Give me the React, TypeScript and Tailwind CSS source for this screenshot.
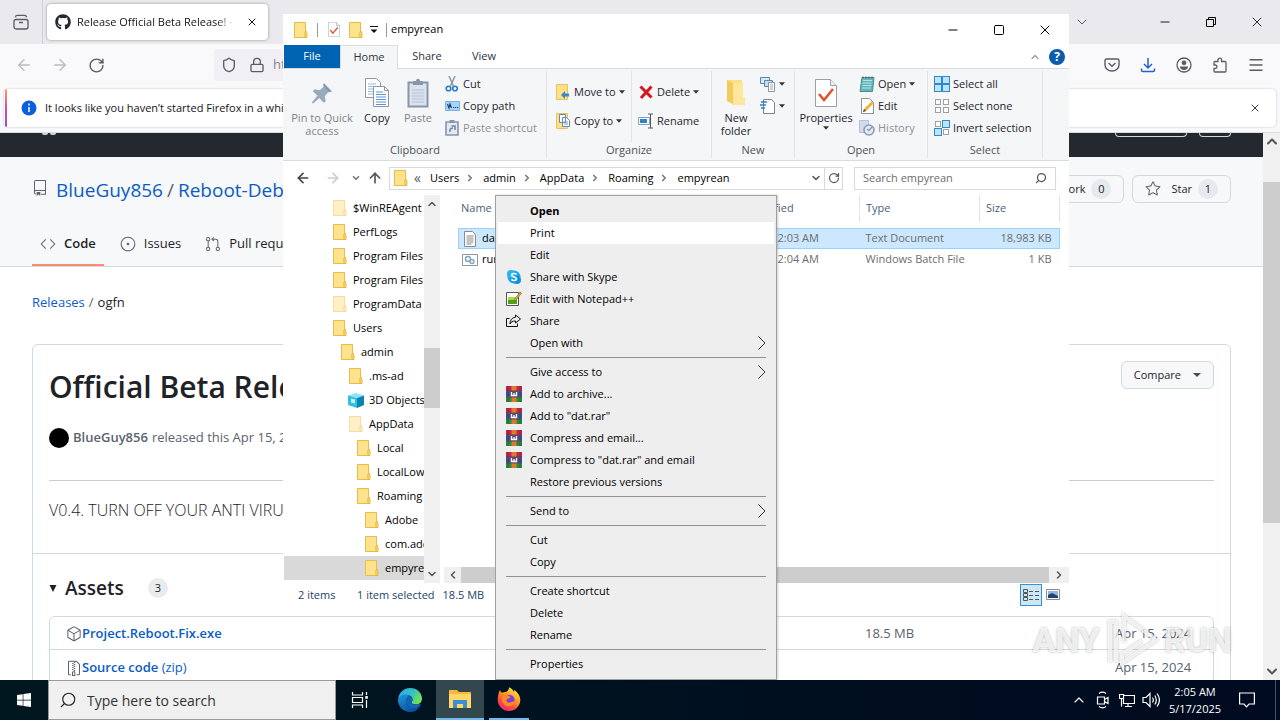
import type { ReactNode } from "react"
import { ArrowDownToLine, ArrowLeft, ArrowRight, ArrowUp, ChevronDown, ChevronLeft, ChevronRight, ChevronUp, Lock, Menu, Minus, RotateCw, Search, Shield, Square, X } from "lucide-react"
import { FaGithub, FaWindows } from "react-icons/fa"
import { GoCode, GoFileZip, GoGitPullRequest, GoIssueOpened, GoPackage, GoRepo, GoStar } from "react-icons/go"

const treeItems = [
  { name: "$WinREAgent", indent: "pl-12", kind: "faded" },
  { name: "PerfLogs", indent: "pl-12", kind: "folder" },
  { name: "Program Files", indent: "pl-12", kind: "folder" },
  { name: "Program Files (x86)", indent: "pl-12", kind: "folder" },
  { name: "ProgramData", indent: "pl-12", kind: "faded" },
  { name: "Users", indent: "pl-12", kind: "folder" },
  { name: "admin", indent: "pl-14", kind: "folder" },
  { name: ".ms-ad", indent: "pl-16", kind: "folder" },
  { name: "3D Objects", indent: "pl-16", kind: "cube" },
  { name: "AppData", indent: "pl-16", kind: "faded" },
  { name: "Local", indent: "pl-[72px]", kind: "folder" },
  { name: "LocalLow", indent: "pl-[72px]", kind: "folder" },
  { name: "Roaming", indent: "pl-[72px]", kind: "folder" },
  { name: "Adobe", indent: "pl-20", kind: "folder" },
  { name: "com.adobe.dunamis", indent: "pl-20", kind: "folder" },
  { name: "empyrean", indent: "pl-20", kind: "folder" },
]

const files = [
  { name: "dat", date: "5/17/2025 2:03 AM", type: "Text Document", size: "18,983 KB", selected: true },
  { name: "run", date: "5/17/2025 2:04 AM", type: "Windows Batch File", size: "1 KB", selected: false },
]

type MenuEntry = { label: string; icon?: "skype" | "notepad" | "share" | "rar"; sub?: boolean; style?: "bold" | "hover" }

const menuGroups: MenuEntry[][] = [
  [
    { label: "Open", style: "bold" },
    { label: "Print", style: "hover" },
    { label: "Edit" },
    { label: "Share with Skype", icon: "skype" },
    { label: "Edit with Notepad++", icon: "notepad" },
    { label: "Share", icon: "share" },
    { label: "Open with", sub: true },
  ],
  [
    { label: "Give access to", sub: true },
    { label: "Add to archive...", icon: "rar" },
    { label: 'Add to "dat.rar"', icon: "rar" },
    { label: "Compress and email...", icon: "rar" },
    { label: 'Compress to "dat.rar" and email', icon: "rar" },
    { label: "Restore previous versions" },
  ],
  [{ label: "Send to", sub: true }],
  [{ label: "Cut" }, { label: "Copy" }],
  [{ label: "Create shortcut" }, { label: "Delete" }, { label: "Rename" }],
  [{ label: "Properties" }],
]

/* ---------- drawings ---------- */

function Folder({ faded = false, className = "w-4 h-4" }: { faded?: boolean; className?: string }) {
  return (
    <svg viewBox="0 0 16 16" className={`${className} shrink-0 ${faded ? "opacity-50" : ""}`}>
      <path d="M1.500.5h11v9h1v6h-12z" fill="#ffe28c" stroke="#e6bc4a" />
      <path d="M12.500 9.500c1 0 1.500 1 1.500 2.500v3.500h-1.500c-1 0-1-6 0-6z" fill="#ffd766" stroke="#dfae35" strokeWidth=".8" />
    </svg>
  )
}

function Cube() {
  return (
    <svg viewBox="0 0 16 16" className="w-4 h-4 shrink-0">
      <path d="M0 3.500L8 1l8 2.500L9 6z" fill="#8de4f4" />
      <path d="M0 3.500L9 6v10l-9-3z" fill="#30bfdc" />
      <path d="M9 6l7-2.500V13l-7 3z" fill="#0b84ad" />
      <path d="M3 6.500l4 1v4l-4-1z" fill="#b9f1fa" />
    </svg>
  )
}

function CheckedPage({ className }: { className: string }) {
  return (
    <svg viewBox="0 0 22 28" className={className}>
      <path d="M.5.5h15l6 6v21H.5z" fill="#fff" stroke="#98a0a8" />
      <path d="M15.500.5v6h6" fill="#eef1f4" stroke="#98a0a8" />
      <path d="M4 15l5 6 9-11" fill="none" stroke="#e0532d" strokeWidth="2.500" />
    </svg>
  )
}

function PinIcon() {
  return (
    <svg viewBox="0 0 24 24" className="w-[22px] h-[22px]">
      <path d="M14 1l9 9-2.500 1.500-1.500-.5-4 4.500 1 5.500-2 1.500-5-5L3 23l-2 .5.5-2 5.500-6.500-5-5L4 8l5.500 1L14 5l-.8-2z" fill="#9aa9be" />
      <path d="M14 3.500l6.500 6.500" stroke="#7f90a8" strokeWidth="1.500" />
    </svg>
  )
}

function CopyPages() {
  return (
    <svg viewBox="0 0 26 30" className="w-[26px] h-[30px]">
      <path d="M1.500.5h11l4 4v15h-15z" fill="#fff" stroke="#8b97a5" />
      <path d="M4 6h8M4 8.500h10M4 11h10M4 13.500h10M4 16h10" stroke="#9db9dd" />
      <path d="M9.500 8.500h11l4 4v16h-15z" fill="#fff" stroke="#8b97a5" />
      <path d="M20.500 8.500v4h4" fill="none" stroke="#8b97a5" />
      <path d="M12 14h7M12 16.500h10M12 19h10M12 21.500h10M12 24h10M12 26.500h10" stroke="#5a95dc" />
    </svg>
  )
}

function PasteBoard({ className }: { className: string }) {
  return (
    <svg viewBox="0 0 22 30" className={className}>
      <path d="M1.500 4.500h19v24h-19z" fill="#dbe2ee" stroke="#8895ab" strokeWidth="2" />
      <path d="M6 3h3c0-3 4-3 4 0h3v4H6z" fill="#8895ab" />
      <path d="M5 12h12M5 15h12M5 18h12M5 21h12M5 24h12" stroke="#b3c0d3" />
    </svg>
  )
}

function CutIcon() {
  return (
    <svg viewBox="0 0 14 16" className="w-3.5 h-4">
      <path d="M4 0l4.500 10M10 0L5.500 10" stroke="#8d98a6" strokeWidth="1.500" />
      <circle cx="3.500" cy="12.500" r="2.300" fill="none" stroke="#2b7fc3" strokeWidth="1.600" />
      <circle cx="10" cy="12.500" r="2.300" fill="none" stroke="#2b7fc3" strokeWidth="1.600" />
    </svg>
  )
}

function CopyPathIcon() {
  return (
    <svg viewBox="0 0 15 10" className="w-[15px] h-2.5">
      <path d="M.5.5h14v9H.5z" fill="#a9d3f5" stroke="#79b2e0" />
      <path d="M2.500 3l1.500 4 1-4 1.500 4M8 6.500h1.200M10 6.500h1.200M12 6.500h1.200" stroke="#20456e" fill="none" strokeWidth="1.200" />
    </svg>
  )
}

function ShortcutIcon() {
  return (
    <svg viewBox="0 0 14 16" className="w-3.5 h-4">
      <path d="M1 2h12v13H1z" fill="#e3e9f2" stroke="#8895ab" strokeWidth="1.600" />
      <path d="M4.500 0h5v3h-5z" fill="#8895ab" />
      <path d="M5 12c-.5-3 1-4 3-4M6.500 6H10v4" fill="none" stroke="#7387a7" strokeWidth="1.600" />
    </svg>
  )
}

function MoveToIcon() {
  return (
    <svg viewBox="0 0 16 16" className="w-4 h-4">
      <path d="M1.500.5h11v15h-11z" fill="#ffe08a" stroke="#e8c25a" />
      <path d="M6 11l4-4v2.500h4v3h-4V15z" fill="#3b87c8" />
    </svg>
  )
}

function CopyToIcon() {
  return (
    <svg viewBox="0 0 16 16" className="w-4 h-4">
      <path d="M1.500.5h11v15h-11z" fill="#ffe08a" stroke="#e8c25a" />
      <path d="M4.500 1.500h6v8h-6zM7.500 4.500h4l3 3v6h-7z" fill="#fff" stroke="#6788b5" />
      <path d="M9 9h4M9 11h4" stroke="#6a9ad0" />
    </svg>
  )
}

function DeleteIcon() {
  return (
    <svg viewBox="0 0 16 16" className="w-4 h-4">
      <path d="M2.500 2.500l11 11M13.500 2.500L3 14" stroke="#d4161d" strokeWidth="3" />
    </svg>
  )
}

function RenameIcon() {
  return (
    <svg viewBox="0 0 16 16" className="w-4 h-4">
      <path d="M.5 4.500h11v7H.5z" fill="#fff" stroke="#7ea5c8" />
      <path d="M2 6h7v4H2z" fill="#3183c4" />
      <path d="M10 1h2.500v14M15 1h-2.500M10 15h5" fill="none" stroke="#555" />
    </svg>
  )
}

function NewFolderIcon() {
  return (
    <svg viewBox="0 0 22 28" className="w-[22px] h-7">
      <path d="M2 1h15v18h3v7H7V9z" fill="#ffdf83" />
      <path d="M2 1l6 3v21l-6-3z" fill="#f5c95a" />
      <path d="M8 4h10v14h2v8H8z" fill="#ffe69f" />
    </svg>
  )
}

function NewItemIcon() {
  return (
    <svg viewBox="0 0 16 16" className="w-4 h-4">
      <path d="M.5 1.500h9v6h-9z" fill="#d7eaf8" stroke="#5b87ad" />
      <path d="M4.500 4.500h8v6h-8z" fill="#c3def2" stroke="#5b87ad" />
      <path d="M8.500 6.500h6v9h-6z" fill="#fff" stroke="#8b949e" />
      <path d="M10 9h3M10 11h3M10 13h3" stroke="#9fa7af" />
    </svg>
  )
}

function EasyAccessIcon() {
  return (
    <svg viewBox="0 0 16 16" className="w-4 h-4">
      <path d="M3.500 1.500h8l3 3v11h-11z" fill="#fff" stroke="#7c858e" />
      <path d="M1 4h6M0 7h6M1 10h4" stroke="#2a82c0" strokeWidth="1.400" />
    </svg>
  )
}

function NotebookIcon() {
  return (
    <svg viewBox="0 0 16 16" className="w-4 h-4">
      <path d="M3 1.500h12l-1.500 14H1z" fill="#62b7bb" stroke="#4a8d92" />
      <path d="M4 4.500h9M3.500 7h9M3.500 9.500h9M3 12h9" stroke="#b9e3e4" />
      <path d="M4 .5v2M7 .5v2M10 .5v2M13 .5v2" stroke="#555" />
    </svg>
  )
}

function EditIcon() {
  return (
    <svg viewBox="0 0 16 16" className="w-4 h-4">
      <path d="M2.500.5h8l4 4v11h-12z" fill="#fff" stroke="#8b949e" />
      <path d="M4 14l1-3 8-8 2 2-8 8z" fill="#f2b230" />
      <path d="M4 14l1-3 2 2z" fill="#444" />
    </svg>
  )
}

function HistoryIcon() {
  return (
    <svg viewBox="0 0 16 16" className="w-4 h-4">
      <path d="M.5.5h9v12h-9z" fill="#d2dbea" stroke="#b5c2d8" />
      <circle cx="10" cy="10" r="5" fill="#e3e9f2" stroke="#8a9cb8" strokeWidth="1.600" />
      <path d="M13 7l-3 3.500L8 9" fill="none" stroke="#8a9cb8" strokeWidth="1.400" />
    </svg>
  )
}

function SelectIcon({ filled }: { filled: boolean[] }) {
  return (
    <svg viewBox="0 0 16 16" className="w-4 h-4">
      {filled.map((on, i) => (
        <rect key={i} x={(i % 2) * 8 + (on ? 0.5 : 1.5)} y={(i > 1 ? 8 : 0) + (on ? 0.5 : 1.5)} width={on ? 7 : 5} height={on ? 7 : 5} fill={on ? "#bfe3fb" : "#fff"} stroke={on ? "#2b8ad0" : "#a0a0a0"} />
      ))}
    </svg>
  )
}

function MenuIcon({ kind }: { kind: MenuEntry["icon"] }) {
  if (kind === "skype") {
    return (
      <svg viewBox="0 0 16 16" className="w-4 h-4">
        <circle cx="8" cy="8" r="6.500" fill="#1ba5e8" />
        <circle cx="5" cy="5" r="4" fill="#28b4f0" />
        <circle cx="11" cy="11" r="4" fill="#0f93dc" />
        <path d="M10.500 5.500C9.500 4 5.500 4 5.700 6.200c.2 2.100 4.800 1.300 4.800 3.600 0 2.200-4 2.200-5 .5" fill="none" stroke="#fff" strokeWidth="1.600" />
      </svg>
    )
  }
  if (kind === "notepad") {
    return (
      <svg viewBox="0 0 16 16" className="w-4 h-4">
        <path d="M.5 1.500h12v13H.5z" fill="#fff" stroke="#555" />
        <path d="M2 6h9v7H2z" fill="#a5dc4f" />
        <path d="M2 9h9v4H2z" fill="#4da01a" />
        <path d="M8 9l6-8 1.500 1L9.500 10z" fill="#e8b42c" stroke="#6b5420" strokeWidth=".6" />
      </svg>
    )
  }
  if (kind === "share") {
    return (
      <svg viewBox="0 0 16 16" className="w-4 h-4" fill="none" stroke="#111">
        <path d="M3.500 5.500h-3v8h11v-3" />
        <path d="M9.500 2l5 4-5 4V8c-3 0-4.500.8-5.500 3 0-4 2-6.500 5.500-6.800z" />
      </svg>
    )
  }
  if (kind === "rar") {
    return (
      <svg viewBox="0 0 16 16" className="w-4 h-4">
        <path d="M0 0h16v5H0z" fill="#c3264c" />
        <path d="M0 5.500h16v5H0z" fill="#3c4f9f" />
        <path d="M0 11h16v5H0z" fill="#2b8a3e" />
        <path d="M0 5.300h16M0 10.700h16" stroke="#222" strokeWidth=".7" />
        <path d="M2 0v16M14 0v16" stroke="#222" strokeOpacity=".35" />
        <path d="M5.500 0h5v16h-5z" fill="#e0782a" />
        <path d="M4 4.500h8v7H4z" fill="#5d4a6a" />
        <path d="M5.500 6v3.500h5V6M8 7v2" fill="none" stroke="#fff" strokeWidth="1.300" />
      </svg>
    )
  }
  return null
}

function EdgeLogo() {
  return (
    <svg viewBox="0 0 24 24" className="w-6 h-6">
      <defs>
        <linearGradient id="edgeTop" x1="0" y1="0" x2="1" y2="0.400">
          <stop offset="0" stopColor="#2aa6e8" />
          <stop offset="0.600" stopColor="#35c1c8" />
          <stop offset="1" stopColor="#6be05a" />
        </linearGradient>
        <linearGradient id="edgeBottom" x1="0" y1="0" x2="0.600" y2="1">
          <stop offset="0" stopColor="#1b9ae0" />
          <stop offset="1" stopColor="#0c4fa0" />
        </linearGradient>
      </defs>
      <path d="M.2 11C1 4 6 0 12 0c7 0 12 5 12 10.500 0 4-3 6-6 6-2.800 0-4.500-1-4.500-2 0-.8 1-1.200 1-3 0-2.500-2.500-4.500-6-4.500C4.500 7 1.500 9 .2 11z" fill="url(#edgeTop)" />
      <path d="M0 12c.5-3.500 4-5.500 7.500-5.500 2 0 3.500.6 4.500 1.500-2.500.5-4 2.800-4 5.500 0 4 3.500 7 8 7 2.500 0 4.500-.8 6-2C20 22 16.500 24 12 24 5.500 24 0 19 0 12z" fill="url(#edgeBottom)" />
      <path d="M8 13.500c0-2.700 1.500-5 4-5.500 1.700 1 2.500 2.300 2.500 3.500 0 1.800-1 2.200-1 3 0 1.500 3 2.500 5 2.200 1.600-.2 3-.9 3.600-.7.600.3.300 1.300-.1 2-1.500 1.500-3.500 2.500-6 2.500-4.500 0-8-3-8-7z" fill="#1266b6" />
    </svg>
  )
}

function FirefoxLogo() {
  return (
    <svg viewBox="0 0 24 24" className="w-6 h-6">
      <defs>
        <linearGradient id="foxBody" x1="0.800" y1="0" x2="0.200" y2="1">
          <stop offset="0" stopColor="#fff44f" />
          <stop offset="0.400" stopColor="#ff9a22" />
          <stop offset="0.700" stopColor="#ff4b3e" />
          <stop offset="1" stopColor="#e3208c" />
        </linearGradient>
      </defs>
      <path d="M3 3c.4 1.500 1.200 2.300 2 2.800C6.500 4.800 8 4.800 9 5c1-.2 2.500-1.500 3.300-4.700C14.500 1.500 16 3 17 5c.3-.8.200-1.500 0-2.300 3.500 2.300 6.300 6 6.300 10.300A11.300 11 0 0 1 12 24 11.300 11 0 0 1 .7 13C.7 9 1.700 5.500 3 3z" fill="url(#foxBody)" />
      <circle cx="12.300" cy="13" r="5.300" fill="#7a3fe0" />
      <path d="M6 9c2-1.500 4-1.300 5.500-.3 1.200.8 2.500 1.300 1.500 2.300-1 .8-3 .3-3.500 2-.3 2 2 3.300 4.500 2.300 1.500-.6 3-1.300 4-.6-1 3-3.500 4.600-6 4.600-4 0-7-3-7-6.800C5 11 5.300 10 6 9z" fill="#ff8a1e" />
    </svg>
  )
}

function ExplorerLogo() {
  return (
    <svg viewBox="0 0 24 20" className="w-6 h-5">
      <path d="M1 1h8l2 2h12v16H1z" fill="#f6b73c" />
      <path d="M1 5h22v14H1z" fill="#ffd767" />
      <path d="M5 19v-8h14v8h-4v-4H9v4z" fill="#3d8fd1" />
    </svg>
  )
}

function Caret() {
  return (
    <svg viewBox="0 0 6 4" className="w-1.5 h-1 shrink-0">
      <path d="M0 .3h6L3 3.700z" fill="#333" />
    </svg>
  )
}

/* ---------- Firefox ---------- */

function FirefoxChrome() {
  return (
    <header className="shrink-0 bg-[#f9f9fb] text-[#5b5b66]">
      <div className="h-11 bg-[#eaeaee] flex items-center">
        <button aria-label="Recent browsing" className="w-[42px] flex justify-center">
          <svg viewBox="0 0 16 16" className="w-4 h-4" fill="none" stroke="currentColor" strokeWidth="1.300">
            <rect x="1" y="5.500" width="14" height="9.500" rx="2" />
            <path d="M2.500 3.300c0-1 .5-2 2-2h7c1.500 0 2 1 2 2M6 8.500h4" />
          </svg>
        </button>
        <div className="w-px h-11 bg-[#cfcfd6] mr-1" />
        <div className="w-[221px] h-9 rounded bg-white shadow-[0_0_3px_rgba(0,0,0,0.4)] flex items-center pl-2 pr-1.5 gap-1.5 text-[#15141a]">
          <FaGithub className="w-4 h-4 text-[#24292f] shrink-0" />
          <span className="flex-1 overflow-hidden whitespace-nowrap text-[11px] [mask-image:linear-gradient(to_right,black_88%,transparent)]">
            Release Official Beta Release! · BlueGuy856
          </span>
          <button aria-label="Close tab" className="shrink-0 px-1">
            <X className="w-3 h-3" strokeWidth={2} />
          </button>
        </div>
        <div className="flex-1" />
        <button aria-label="List all tabs" className="w-[60px] flex justify-center">
          <ChevronDown className="w-4 h-4" strokeWidth={1.500} />
        </button>
        <button aria-label="Minimize" className="w-[46px] ml-[30px] flex justify-center text-black">
          <Minus className="w-3.5 h-3.5" strokeWidth={1.500} />
        </button>
        <button aria-label="Restore" className="w-[46px] flex justify-center text-black">
          <svg viewBox="0 0 10 10" className="w-2.5 h-2.5" fill="none" stroke="currentColor">
            <path d="M.5 2.500h7v7h-7zM2.500 2.500v-2h7v7h-2" />
          </svg>
        </button>
        <button aria-label="Close" className="w-[46px] flex justify-center text-black">
          <X className="w-4 h-4" strokeWidth={1.200} />
        </button>
      </div>

      <div className="h-[42px] flex items-center px-1.5">
        <button aria-label="Back" className="w-9 flex justify-center opacity-40"><ArrowLeft className="w-[18px] h-[18px]" strokeWidth={1.700} /></button>
        <button aria-label="Forward" className="w-9 flex justify-center opacity-40"><ArrowRight className="w-[18px] h-[18px]" strokeWidth={1.700} /></button>
        <button aria-label="Reload" className="w-9 flex justify-center"><RotateCw className="w-[17px] h-[17px]" strokeWidth={2} /></button>
        <div className="ml-[100px] mr-[200px] flex-1 h-8 rounded bg-[#f0f0f4] flex items-center pl-[7px] gap-3">
          <Shield className="w-4 h-4 shrink-0" strokeWidth={2} />
          <Lock className="w-4 h-4 shrink-0" strokeWidth={2} />
          <input aria-label="Address" defaultValue="https://github.com/BlueGuy856/Reboot-Debugger/releases/tag/ogfn" className="-ml-1 flex-1 bg-transparent outline-none text-[13px] text-[#85858f]" />
        </div>
        <button aria-label="Save to Pocket" className="w-9 flex justify-center">
          <svg viewBox="0 0 16 16" className="w-4 h-4" fill="none" stroke="currentColor" strokeWidth="1.400">
            <path d="M2.500 2h11c.8 0 1.500.6 1.500 1.500V8a7 6 0 0 1-14 0V3.500C1 2.600 1.700 2 2.500 2zM4.500 6L8 9.300 11.500 6" />
          </svg>
        </button>
        <button aria-label="Downloads" className="w-9 flex justify-center text-[#2563c9]">
          <svg viewBox="0 0 16 16" className="w-4 h-4" fill="none" stroke="currentColor" strokeWidth="1.500">
            <path d="M8 1v10M4 7l4 4 4-4M1.500 11.500V13c0 1 .6 1.500 1.500 1.500h10c.9 0 1.500-.5 1.500-1.500v-1.500" />
          </svg>
        </button>
        <button aria-label="Account" className="w-9 flex justify-center">
          <svg viewBox="0 0 16 16" className="w-4 h-4">
            <circle cx="8" cy="8" r="7" fill="none" stroke="currentColor" strokeWidth="1.300" />
            <circle cx="8" cy="5.800" r="2.400" fill="currentColor" />
            <path d="M4 9.500h8c0 2-1.500 3.500-4 3.500s-4-1.500-4-3.500z" fill="currentColor" />
          </svg>
        </button>
        <button aria-label="Extensions" className="w-9 flex justify-center">
          <svg viewBox="0 0 16 16" className="w-4 h-4" fill="none" stroke="currentColor" strokeWidth="1.300">
            <path d="M6 4.500V3a1.800 1.800 0 0 1 3.600 0v1.500H13c.6 0 1 .4 1 1V14c0 .6-.4 1-1 1H3c-.6 0-1-.4-1-1v-2.500h1.200a1.700 1.700 0 0 0 0-3.500H2V5.500c0-.6.400-1 1-1z" />
          </svg>
        </button>
        <button aria-label="Application menu" className="w-9 flex justify-center"><Menu className="w-[18px] h-[18px]" strokeWidth={1.700} /></button>
      </div>

      <div className="px-1 pt-[3px] pb-[5px] border-b border-[#d8dde2]">
        <div className="h-[38px] rounded bg-white shadow-[0_0_2px_rgba(0,0,0,0.25)] flex items-center overflow-hidden text-[#15141a]">
          <div className="w-0.5 h-full ml-px bg-gradient-to-b from-[#ff9a56] via-[#d6489a] to-[#8a4fd8]" />
          <svg viewBox="0 0 16 16" className="w-4 h-4 ml-3.5 shrink-0">
            <circle cx="8" cy="8" r="7.500" fill="#0a5fdc" />
            <path d="M8 3.500v2M8 7v5" stroke="#fff" strokeWidth="1.500" />
          </svg>
          <p className="ml-2 flex-1 truncate text-[11px]">
            It looks like you haven’t started Firefox in a while. Do you want to clean it up for a fresh, like-new experience?
          </p>
          <button aria-label="Dismiss" className="w-[42px] flex justify-center"><X className="w-3 h-3" strokeWidth={1.700} /></button>
        </div>
      </div>
    </header>
  )
}

function GithubPage() {
  return (
    <main className="flex-1 min-h-0 flex bg-white text-[#1f2328]">
      <div className="flex-1 min-w-0 overflow-hidden text-[14px]">
        <div className="h-6 bg-[#24292f] px-8 flex items-start">
          <div className="ml-2.5 w-1.5 h-0.5 rounded-b bg-gray-300" />
          <div className="ml-0.5 w-1.5 h-0.5 rounded-b bg-gray-300" />
          <div className="ml-auto w-[72px] h-1 rounded-b-md border border-t-0 border-gray-300" />
          <div className="w-8 h-1 ml-3 rounded-b-md border border-t-0 border-gray-300" />
        </div>

        <div className="bg-[#f6f8fa] border-b border-[#d1d9e0] pt-4 px-8">
          <div className="flex items-center h-8">
            <GoRepo className="w-4 h-4 mr-2 mb-0.5 text-[#59636e]" />
            <h1 className="text-[19px] pt-0.5 leading-8 flex gap-1">
              <a href="#owner" className="text-[#0b5cc4]">BlueGuy856</a>
              <span className="text-[#59636e]">/</span>
              <a href="#repo" className="text-[#0b5cc4] font-medium">Reboot-Debugger</a>
            </h1>
            <div className="flex-1" />
            <div className="flex gap-2 text-[11px]">
              <button className="h-7 px-3 rounded-md border border-[#d1d9e0] bg-[#f6f8fa] flex items-center gap-1.5">
                Fork <span className="h-5 min-w-5 rounded-full bg-[#e6eaef] leading-5 text-center">0</span>
              </button>
              <button className="h-7 px-3 rounded-md border border-[#d1d9e0] bg-[#f6f8fa] flex items-center gap-1.5">
                <GoStar className="w-4 h-4 mr-1 text-[#59636e]" /> Star
                <span className="h-5 min-w-5 rounded-full bg-[#e6eaef] leading-5 text-center">1</span>
              </button>
            </div>
          </div>
          <nav className="flex mt-3 h-[49px] text-[13px]">
            <a href="#code" className="flex items-center gap-2 px-2 pt-1.5 border-b-2 border-[#fd8c73] font-semibold"><GoCode className="w-4 h-4 text-[#59636e]" />Code</a>
            <a href="#issues" className="flex items-center gap-2 px-2 pt-1.5 ml-2 border-b-2 border-transparent"><GoIssueOpened className="w-4 h-4 text-[#59636e]" />Issues</a>
            <a href="#pulls" className="flex items-center gap-2 px-2 pt-1.5 ml-2 border-b-2 border-transparent"><GoGitPullRequest className="w-4 h-4 text-[#59636e]" />Pull requests</a>
          </nav>
        </div>

        <nav className="px-8 pt-[25px] text-[13px] leading-5 flex gap-1">
          <a href="#releases" className="text-[#0b5cc4]">Releases</a>
          <span className="text-[#59636e]">/</span>
          <span>ogfn</span>
        </nav>

        <section className="mx-8 mt-8 border border-[#d1d9e0] rounded-md">
          <div className="p-4">
            <div className="flex justify-between">
              <h2 className="text-[30px] leading-[52px] font-semibold">Official Beta Release!</h2>
              <button className="h-7 px-3 rounded-md border border-[#d1d9e0] bg-[#f6f8fa] text-[11px] flex items-center gap-3">
                Compare
                <svg viewBox="0 0 8 4" className="w-2 h-1"><path d="M0 0h8L4 4z" fill="#444c55" /></svg>
              </button>
            </div>
            <div className="flex items-center gap-1 mt-[13px] text-[#59636e] text-[13px] leading-5">
              <span className="w-5 h-5 rounded-full bg-black mt-0.5" />
              <b className="font-semibold">BlueGuy856</b>
              <span>released this Apr 15, 2024</span>
            </div>
            <hr className="mt-8 border-[#c4ccd4]" />
            <p className="mt-[17px] mb-[15px] text-[16px] leading-6 font-light">V0.4. TURN OFF YOUR ANTI VIRUS</p>
          </div>
          <div className="border-t border-[#d1d9e0] px-4 pt-5">
            <h3 className="flex items-center h-7 text-[19px] font-semibold">
              <svg viewBox="0 0 8 8" className="w-2 h-2 mr-2"><path d="M.5 1h7L4 8z" fill="#1f2328" /></svg>
              Assets
              <span className="ml-6 h-5 w-5 rounded-full bg-[#e9ecef] text-[11px] leading-5 font-normal text-center">3</span>
            </h3>
            <ul className="mt-3.5 border border-[#d1d9e0] rounded-md text-[13px]">
              <li className="flex items-center h-[33px] pt-0.5 px-4 border-b border-[#d1d9e0]">
                <GoPackage className="w-4 h-4 text-[#59636e]" />
                <a href="#fix" className="flex-1 font-semibold text-[#0b5cc4]">Project.Reboot.Fix.exe</a>
                <span className="w-[250px] text-[#59636e]">18.5 MB</span>
                <span className="w-[82px] text-[#59636e]">Apr 15, 2024</span>
              </li>
              <li className="flex items-center h-[33px] pt-0.5 px-4">
                <GoFileZip className="w-4 h-4 text-[#59636e]" />
                <a href="#zip" className="flex-1 text-[#0b5cc4]"><b className="font-semibold">Source code</b> (zip)</a>
                <span className="w-[82px] text-[#59636e]">Apr 15, 2024</span>
              </li>
            </ul>
          </div>
        </section>
      </div>

      <div className="w-[17px] bg-[#f0f0f0] flex flex-col items-center text-[#555]">
        <ChevronUp className="w-4 h-[17px]" strokeWidth={3} />
        <div className="mt-8 w-full h-[341px] bg-[#cdcdcd]" />
        <div className="flex-1" />
        <ChevronDown className="w-4 h-[17px]" strokeWidth={3} />
      </div>
    </main>
  )
}

/* ---------- File Explorer ---------- */

function RibbonGroup({ label, className, children }: { label: string; className: string; children: ReactNode }) {
  return (
    <div className={`border-r border-[#dfe2e6] my-0.5 flex flex-col ${className}`}>
      <div className="flex-1 flex">{children}</div>
      <div className="text-center text-[#4a525c] leading-4">{label}</div>
    </div>
  )
}

function SmallButton({ icon, label, name, caret = false, disabled = false }: { icon: ReactNode; label?: string; name?: string; caret?: boolean; disabled?: boolean }) {
  return (
    <button disabled={disabled} aria-label={name} className={`h-[22px] flex items-center gap-[3px] whitespace-nowrap ${disabled ? "text-[#8a919b]" : ""}`}>
      <span className="w-4 flex justify-center">{icon}</span>
      {label}
      {caret && <Caret />}
    </button>
  )
}

function BigButton({ icon, label, caret = false, disabled = false, className }: { icon: ReactNode; label: string; caret?: boolean; disabled?: boolean; className: string }) {
  return (
    <button disabled={disabled} className={`flex flex-col items-center self-start leading-[13px] ${disabled ? "text-[#7c848e]" : ""} ${className}`}>
      <span className="h-10 pt-1 flex items-center">{icon}</span>
      <span>{label}</span>
      {caret && <span className="pt-0.5"><Caret /></span>}
    </button>
  )
}

function Ribbon() {
  return (
    <div className="h-[93px] flex pl-px bg-[#f5f6f7] border-y border-[#dadbdc] text-[#1e2630]">
      <RibbonGroup label="Clipboard" className="w-[263px]">
        <BigButton icon={<PinIcon />} label="Pin to Quick access" disabled className="w-[76px]" />
        <BigButton icon={<CopyPages />} label="Copy" className="w-[34px]" />
        <BigButton icon={<PasteBoard className="w-[22px] h-[30px]" />} label="Paste" disabled className="w-12" />
        <div className="pt-0.5 pl-0.5">
          <SmallButton icon={<CutIcon />} label="Cut" />
          <SmallButton icon={<CopyPathIcon />} label="Copy path" />
          <SmallButton icon={<ShortcutIcon />} label="Paste shortcut" disabled />
        </div>
      </RibbonGroup>
      <RibbonGroup label="Organize" className="w-[165px]">
        <div className="flex flex-col gap-[7px] pt-2.5 pl-2 w-[85px] border-r border-[#e2e4e8]">
          <SmallButton icon={<MoveToIcon />} label="Move to" caret />
          <SmallButton icon={<CopyToIcon />} label="Copy to" caret />
        </div>
        <div className="flex flex-col gap-[7px] pt-2.5 pl-1.5">
          <SmallButton icon={<DeleteIcon />} label="Delete" caret />
          <SmallButton icon={<RenameIcon />} label="Rename" />
        </div>
      </RibbonGroup>
      <RibbonGroup label="New" className="w-[83px]">
        <BigButton icon={<NewFolderIcon />} label="New folder" className="ml-1 w-10" />
        <div className="flex flex-col pt-0.5 pl-1">
          <SmallButton icon={<NewItemIcon />} name="New item" caret />
          <SmallButton icon={<EasyAccessIcon />} name="Easy access" caret />
        </div>
      </RibbonGroup>
      <RibbonGroup label="Open" className="w-[133px]">
        <BigButton icon={<CheckedPage className="w-[22px] h-7" />} label="Properties" caret className="w-[62px]" />
        <div className="flex flex-col pt-0.5 pl-0.5">
          <SmallButton icon={<NotebookIcon />} label="Open" caret />
          <SmallButton icon={<EditIcon />} label="Edit" />
          <SmallButton icon={<HistoryIcon />} label="History" disabled />
        </div>
      </RibbonGroup>
      <RibbonGroup label="Select" className="w-[115px]">
        <div className="flex flex-col pt-0.5 pl-1.5">
          <SmallButton icon={<SelectIcon filled={[true, true, true, true]} />} label="Select all" />
          <SmallButton icon={<SelectIcon filled={[false, false, false, false]} />} label="Select none" />
          <SmallButton icon={<SelectIcon filled={[false, true, true, false]} />} label="Invert selection" />
        </div>
      </RibbonGroup>
    </div>
  )
}

function AddressBar() {
  const crumbs = ["Users", "admin", "AppData", "Roaming", "empyrean"]
  return (
    <div className="h-[34px] flex items-center pl-3 pr-[13px]">
      <button aria-label="Back" className="mr-3.5 text-[#444]"><ArrowLeft className="w-4 h-4" strokeWidth={2.500} /></button>
      <button aria-label="Forward" className="mr-2.5 text-[#ccc]"><ArrowRight className="w-4 h-4" strokeWidth={2.500} /></button>
      <button aria-label="Recent locations" className="mr-1.5 text-[#777]"><ChevronDown className="w-2.5 h-2.5" strokeWidth={4} /></button>
      <button aria-label="Up" className="mr-1.5 text-[#555]"><ArrowUp className="w-4 h-4" strokeWidth={2.500} /></button>
      <div className="flex-1 h-[23px] border border-[#d9d9d9] flex items-center pl-[3px]">
        <Folder />
        <span className="mx-1 px-px text-[14px] leading-4 text-[#555]">«</span>
        {crumbs.map((crumb, i) => (
          <span key={crumb} className="flex items-center">
            {i > 0 && <ChevronRight className="w-2.5 h-2.5 ml-1.5 mr-2 text-[#777]" strokeWidth={4} />}
            <a href="#crumb" className={i === 0 ? "ml-1" : ""}>{crumb}</a>
          </span>
        ))}
        <span className="flex-1" />
        <button aria-label="Previous locations" className="w-4 flex justify-center text-[#555]"><ChevronDown className="w-3 h-3" strokeWidth={3} /></button>
        <button aria-label="Refresh" className="w-[18px] h-full border-l border-[#d9d9d9] flex justify-center items-center text-[#555]"><RotateCw className="w-3 h-3" strokeWidth={2.500} /></button>
      </div>
      <div className="w-[202px] h-[23px] ml-[11px] border border-[#d9d9d9] flex items-center px-2">
        <input aria-label="Search empyrean" placeholder="Search empyrean" className="flex-1 min-w-0 outline-none placeholder:text-[#6d6d6d]" />
        <Search className="w-3 h-3 -scale-x-100 text-[#555]" strokeWidth={2.500} />
      </div>
    </div>
  )
}

function FolderTree() {
  return (
    <nav className="w-[157px] flex">
      <ul className="flex-1 min-w-0 pt-px pl-px overflow-hidden">
        {treeItems.map((item) => (
          <li key={item.name} className={`h-6 flex items-center gap-[5px] whitespace-nowrap overflow-hidden ${item.indent} ${item.name === "empyrean" ? "bg-[#d9d9d9]" : ""}`}>
            {item.kind === "cube" ? <Cube /> : <Folder faded={item.kind === "faded"} />}
            {item.name}
          </li>
        ))}
      </ul>
      <div className="w-4 bg-[#f0f0f0] flex flex-col items-center text-[#555]">
        <ChevronUp className="w-3 h-[18px]" strokeWidth={3} />
        <div className="mt-[135px] w-full h-[60px] bg-[#cdcdcd]" />
        <div className="flex-1" />
        <ChevronDown className="w-3 h-[18px]" strokeWidth={3} />
      </div>
    </nav>
  )
}

function FileList() {
  return (
    <div className="flex-1 min-w-0 flex flex-col pl-1">
      <div className="flex-1 pl-3.5 pr-[9px]">
        <table className="w-full table-fixed text-left">
          <thead>
            <tr className="h-[27px] text-[#4c607a]">
              <th className="font-normal pl-[3px] border-r border-[#e5e5e5]">Name</th>
              <th className="w-[145px] font-normal pl-1.5 border-r border-[#e5e5e5]">Date modified</th>
              <th className="w-[120px] font-normal pl-1.5 border-r border-[#e5e5e5]">Type</th>
              <th className="w-20 font-normal pl-1.5 border-r border-[#e5e5e5]">Size</th>
            </tr>
            <tr className="h-1.5"><td colSpan={4} /></tr>
          </thead>
          <tbody className="text-[#6d6d6d]">
            {files.map((file) => (
              <tr key={file.name} className={`h-[21px] ${file.selected ? "bg-[#cce8ff] outline outline-1 -outline-offset-1 outline-[#99d1ff]" : ""}`}>
                <td className="text-black">
                  <span className="flex items-center gap-1 pl-1">
                    {file.selected ? (
                      <svg viewBox="0 0 16 16" className="w-4 h-4">
                        <path d="M2.500.5h8l3 3v12h-11z" fill="#fff" stroke="#8a8a8a" />
                        <path d="M4.500 5h7M4.500 7h7M4.500 9h7M4.500 11h7M4.500 13h5" stroke="#888" />
                      </svg>
                    ) : (
                      <svg viewBox="0 0 16 16" className="w-4 h-4">
                        <path d="M.5 2.500h15v11H.5z" fill="#fff" stroke="#8a96a3" />
                        <circle cx="6" cy="7" r="2.500" fill="none" stroke="#7fa5b8" strokeWidth="1.400" />
                        <circle cx="10" cy="9.500" r="2" fill="none" stroke="#7fa5b8" strokeWidth="1.300" />
                      </svg>
                    )}
                    {file.name}
                  </span>
                </td>
                <td className="pl-2">{file.date}</td>
                <td className="pl-1.5 whitespace-nowrap">{file.type}</td>
                <td className="pr-2 text-right whitespace-nowrap">{file.size}</td>
              </tr>
            ))}
          </tbody>
        </table>
      </div>
      <div className="h-4 bg-[#f0f0f0] flex items-center text-[#555]">
        <span className="w-[17px] flex justify-center"><ChevronLeft className="w-3 h-3" strokeWidth={3} /></span>
        <div className="flex-1 h-full bg-[#cdcdcd]" />
        <span className="w-5 flex justify-center"><ChevronRight className="w-3 h-3" strokeWidth={3} /></span>
      </div>
    </div>
  )
}

function ExplorerWindow() {
  return (
    <section className="absolute left-[283px] top-3.5 w-[786px] bg-white text-black text-[11px]">
      <div className="h-[31px] flex items-center pl-2.5 pr-px">
        <Folder />
        <span className="w-px h-3.5 mx-2 bg-[#999]" />
        <CheckedPage className="w-3 h-[15px] ml-0.5" />
        <Folder className="w-4 h-4 ml-2" />
        <svg viewBox="0 0 8 8" className="w-2 h-2 ml-1.5 mr-2"><path d="M0 .5h8" stroke="#111" /><path d="M.5 3.500h7L4 7z" fill="#111" /></svg>
        <span className="w-px h-3.5 mr-1 bg-[#999]" />
        <span className="flex-1">empyrean</span>
        <button aria-label="Minimize window" className="w-[46px] flex justify-center"><Minus className="w-3.5 h-3.5" strokeWidth={1.700} /></button>
        <button aria-label="Maximize window" className="w-[46px] flex justify-center"><Square className="w-3 h-3" strokeWidth={2} /></button>
        <button aria-label="Close window" className="w-[46px] flex justify-center"><X className="w-4 h-4" strokeWidth={1.500} /></button>
      </div>

      <div className="h-[23px] flex pl-px text-[#2b3440]">
        <button className="w-14 bg-[#0063b1] text-white">File</button>
        <button className="w-[58px] h-6 bg-[#f5f6f7] border border-b-0 border-[#dadbdc] relative z-10">Home</button>
        <button className="w-[58px]">Share</button>
        <button className="w-14">View</button>
        <span className="flex-1" />
        <button aria-label="Collapse ribbon" className="w-7 flex justify-center items-center text-[#999]"><ChevronUp className="w-3 h-3" strokeWidth={2.500} /></button>
        <button aria-label="Help" className="mr-1">
          <span className="block w-4 h-4 rounded-full bg-[#0b5cad] text-white text-[12px] leading-4 font-bold">?</span>
        </button>
      </div>

      <Ribbon />
      <AddressBar />

      <div className="h-[388px] flex">
        <FolderTree />
        <FileList />
      </div>

      <div className="h-6 flex items-center pl-[15px] pr-[9px] text-[#24426b]">
        <span className="w-[59px]">2 items</span>
        <span>1 item selected</span>
        <span className="ml-2 flex-1">18.5 MB</span>
        <button aria-label="Details view" className="w-[22px] h-[22px] border border-[#3a93c8] bg-[#cbe8f6] flex justify-center items-center">
          <svg viewBox="0 0 16 14" className="w-4 h-3.5" fill="none" stroke="#555">
            <path d="M.5 1.500h4v3h-4zM.5 5.500h4v3h-4zM.5 9.500h4v3h-4zM6 3.500h4M6 7.500h4M6 11.500h4M12 3.500h4M12 7.500h4M12 11.500h4" />
          </svg>
        </button>
        <button aria-label="Large icons view" className="ml-1">
          <svg viewBox="0 0 14 12" className="w-3.5 h-3">
            <path d="M.5.5h13v10H.5z" fill="#fff" stroke="#8a8a9a" />
            <path d="M2 2h10v7H2z" fill="#8fb8e0" />
            <path d="M2 6l4-2 6 3v2H2z" fill="#20456e" />
          </svg>
        </button>
      </div>
    </section>
  )
}

function ContextMenu() {
  return (
    <div role="menu" className="absolute left-[495px] top-[195px] w-[282px] border border-[#a0a0a0] bg-[#eee] px-0.5 py-1 text-[11px] text-black shadow-[1px_0_2px_rgba(0,0,0,0.2)]">
      {menuGroups.map((group, i) => (
        <div key={group[0].label}>
          {i > 0 && <div className="mx-2 my-[3px] h-px bg-[#919191]" />}
          {group.map((entry) => (
            <button
              key={entry.label}
              role="menuitem"
              className={`w-full h-[22px] flex items-center pl-2 pr-1.5 text-left ${entry.style === "bold" ? "font-bold" : ""} ${entry.style === "hover" ? "bg-white" : ""}`}
            >
              <span className="w-6"><MenuIcon kind={entry.icon} /></span>
              <span className="flex-1 whitespace-nowrap">{entry.label}</span>
              {entry.sub && (
                <svg viewBox="0 0 8 14" className="w-2 h-3.5 mr-0.5" fill="none" stroke="#333"><path d="M.5.5L7 7 .5 13.500" /></svg>
              )}
            </button>
          ))}
        </div>
      ))}
    </div>
  )
}

/* ---------- desktop ---------- */

function Watermark() {
  return (
    <div className="absolute right-12 bottom-[52px] h-14 flex items-center gap-1 text-[34px] leading-none font-bold text-white/75 font-['Roboto',sans-serif] [text-shadow:0_0_3px_rgba(0,0,0,0.3)] pointer-events-none">
      <span>ANY</span>
      <svg viewBox="0 0 56 56" className="w-14 h-14 drop-shadow-[0_0_1px_rgba(0,0,0,0.35)]" fill="none" stroke="#fff" strokeOpacity=".75" strokeWidth="4">
        <path d="M12 50V10l-6 0v40M20 30V4l32 24-34 23v-9l20-13" />
      </svg>
      <span>RUN</span>
    </div>
  )
}

function Taskbar() {
  return (
    <footer className="relative h-10 shrink-0 flex items-center bg-gradient-to-r from-[#00171f] to-[#000a20] text-white text-[11px]">
      <button aria-label="Start" className="w-12 flex justify-center"><FaWindows className="w-4 h-4" /></button>
      <label className="w-72 h-10 bg-[#f0f0f0] border border-[#9a9a9a] flex items-center pl-2.5 gap-2.5 text-[#222]">
        <Search className="w-[18px] h-[18px] -scale-x-100" strokeWidth={1.500} />
        <input aria-label="Type here to search" placeholder="Type here to search" className="flex-1 min-w-0 bg-transparent outline-none text-[14px] placeholder:text-[#333]" />
      </label>
      <button aria-label="Task view" className="w-12 flex justify-center">
        <svg viewBox="0 0 18 16" className="w-[18px] h-4" fill="none" stroke="#fff" strokeWidth="1.200">
          <path d="M1.500 0v3h10V0M1.500 5.500h10v5h-10zM1.500 16v-3h10v3M15.500 0v3M15.500 8v8" />
          <path d="M14.300 4h2.500v2.800h-2.500z" fill="#fff" stroke="none" />
        </svg>
      </button>
      <button aria-label="Edge" className="w-[52px] flex justify-center"><EdgeLogo /></button>
      <button aria-label="File Explorer" className="w-12 h-10 flex justify-center items-center bg-[#33474f] border-b-2 border-[#76b9ed]"><ExplorerLogo /></button>
      <button aria-label="Firefox" className="w-10 ml-[5px] h-10 flex justify-center items-center border-b-2 border-[#76b9ed]"><FirefoxLogo /></button>
      <span className="flex-1" />
      <button aria-label="Show hidden icons" className="w-6 flex justify-center"><ChevronUp className="w-4 h-4" strokeWidth={1.700} /></button>
      <button aria-label="Meet now" className="w-6 flex justify-center">
        <svg viewBox="0 0 16 18" className="w-4 h-[18px]" fill="none" stroke="#fff" strokeWidth="1.200">
          <path d="M2.500 6h7v7h-7zM9.500 8.500L13 6.500v6l-3.500-2M4 2.500c2-1.500 5-1.500 7 0M4 15.500c2 1.500 5 1.500 7 0" />
        </svg>
      </button>
      <button aria-label="Network" className="w-6 flex justify-center">
        <svg viewBox="0 0 16 16" className="w-4 h-4" fill="none" stroke="#fff" strokeWidth="1.200">
          <path d="M5 3.500h10.500v8H4.500V7M9 11.500v3M6 14.500h7M.5 2.500h4v4h-4zM2.500 6.500v8" />
        </svg>
      </button>
      <button aria-label="Volume" className="w-6 flex justify-center">
        <svg viewBox="0 0 18 16" className="w-[18px] h-4" fill="none" stroke="#fff" strokeWidth="1.200">
          <path d="M1 5.500h3l4-4v13l-4-4H1zM10.500 5.500c1 1.500 1 3.500 0 5M12.800 3.500c2 2.500 2 6.500 0 9M15 1.500c3 4 3 9 0 13" />
        </svg>
      </button>
      <time className="w-16 text-center leading-[17px]">2:05 AM<br />5/17/2025</time>
      <button aria-label="Notifications" className="w-10 flex justify-center">
        <svg viewBox="0 0 16 16" className="w-4 h-4" fill="none" stroke="#fff" strokeWidth="1.200">
          <path d="M.6 1h14.800v11H10l-2.500 2.800L5 12H.6z" />
        </svg>
      </button>
      <span className="ml-2 mr-1 w-px h-10 bg-[#45505c]" />
    </footer>
  )
}

export default function App() {
  return (
    <div className="relative h-screen overflow-hidden flex flex-col bg-white font-['Open_Sans','Noto_Sans',sans-serif]">
      <FirefoxChrome />
      <GithubPage />
      <ExplorerWindow />
      <Watermark />
      <Taskbar />
      <ContextMenu />
    </div>
  )
}
